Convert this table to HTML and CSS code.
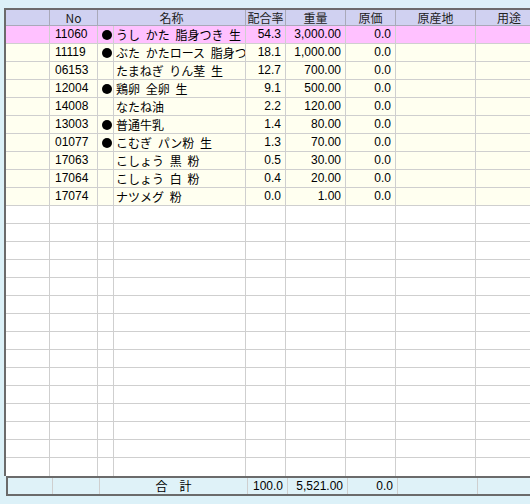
FILE: index.html
```html
<!DOCTYPE html>
<html lang="ja">
<head>
<meta charset="utf-8">
<link rel="stylesheet" href="styles.css">
</head>
<body>
<div class="sheet">
  <div class="grid">
    <div class="row head">
      <div class="c c0"></div>
      <div class="c c1 center">No</div>
      <div class="c c23 center">名称</div>
      <div class="c c4 center">配合率</div>
      <div class="c c5 center">重量</div>
      <div class="c c6 center">原価</div>
      <div class="c c7 center">原産地</div>
      <div class="c c8 right">用途</div>
    </div>
    <div class="row sel">
      <div class="c c0"></div><div class="c c1 num-l">11060</div><div class="c c2"><span class="dot"></span></div><div class="c c3">うし かた 脂身つき 生</div><div class="c c4 num">54.3</div><div class="c c5 num">3,000.00</div><div class="c c6 num">0.0</div><div class="c c7"></div><div class="c c8"></div>
    </div>
    <div class="row data">
      <div class="c c0"></div><div class="c c1 num-l">11119</div><div class="c c2"><span class="dot"></span></div><div class="c c3">ぶた かたロース 脂身つき 生</div><div class="c c4 num">18.1</div><div class="c c5 num">1,000.00</div><div class="c c6 num">0.0</div><div class="c c7"></div><div class="c c8"></div>
    </div>
    <div class="row data">
      <div class="c c0"></div><div class="c c1 num-l">06153</div><div class="c c2"></div><div class="c c3">たまねぎ りん茎 生</div><div class="c c4 num">12.7</div><div class="c c5 num">700.00</div><div class="c c6 num">0.0</div><div class="c c7"></div><div class="c c8"></div>
    </div>
    <div class="row data">
      <div class="c c0"></div><div class="c c1 num-l">12004</div><div class="c c2"><span class="dot"></span></div><div class="c c3">鶏卵 全卵 生</div><div class="c c4 num">9.1</div><div class="c c5 num">500.00</div><div class="c c6 num">0.0</div><div class="c c7"></div><div class="c c8"></div>
    </div>
    <div class="row data">
      <div class="c c0"></div><div class="c c1 num-l">14008</div><div class="c c2"></div><div class="c c3">なたね油</div><div class="c c4 num">2.2</div><div class="c c5 num">120.00</div><div class="c c6 num">0.0</div><div class="c c7"></div><div class="c c8"></div>
    </div>
    <div class="row data">
      <div class="c c0"></div><div class="c c1 num-l">13003</div><div class="c c2"><span class="dot"></span></div><div class="c c3">普通牛乳</div><div class="c c4 num">1.4</div><div class="c c5 num">80.00</div><div class="c c6 num">0.0</div><div class="c c7"></div><div class="c c8"></div>
    </div>
    <div class="row data">
      <div class="c c0"></div><div class="c c1 num-l">01077</div><div class="c c2"><span class="dot"></span></div><div class="c c3">こむぎ パン粉 生</div><div class="c c4 num">1.3</div><div class="c c5 num">70.00</div><div class="c c6 num">0.0</div><div class="c c7"></div><div class="c c8"></div>
    </div>
    <div class="row data">
      <div class="c c0"></div><div class="c c1 num-l">17063</div><div class="c c2"></div><div class="c c3">こしょう 黒 粉</div><div class="c c4 num">0.5</div><div class="c c5 num">30.00</div><div class="c c6 num">0.0</div><div class="c c7"></div><div class="c c8"></div>
    </div>
    <div class="row data">
      <div class="c c0"></div><div class="c c1 num-l">17064</div><div class="c c2"></div><div class="c c3">こしょう 白 粉</div><div class="c c4 num">0.4</div><div class="c c5 num">20.00</div><div class="c c6 num">0.0</div><div class="c c7"></div><div class="c c8"></div>
    </div>
    <div class="row data">
      <div class="c c0"></div><div class="c c1 num-l">17074</div><div class="c c2"></div><div class="c c3">ナツメグ 粉</div><div class="c c4 num">0.0</div><div class="c c5 num">1.00</div><div class="c c6 num">0.0</div><div class="c c7"></div><div class="c c8"></div>
    </div>
    <div class="row empty"><div class="c c0"></div><div class="c c1"></div><div class="c c2"></div><div class="c c3"></div><div class="c c4"></div><div class="c c5"></div><div class="c c6"></div><div class="c c7"></div><div class="c c8"></div></div>
    <div class="row empty"><div class="c c0"></div><div class="c c1"></div><div class="c c2"></div><div class="c c3"></div><div class="c c4"></div><div class="c c5"></div><div class="c c6"></div><div class="c c7"></div><div class="c c8"></div></div>
    <div class="row empty"><div class="c c0"></div><div class="c c1"></div><div class="c c2"></div><div class="c c3"></div><div class="c c4"></div><div class="c c5"></div><div class="c c6"></div><div class="c c7"></div><div class="c c8"></div></div>
    <div class="row empty"><div class="c c0"></div><div class="c c1"></div><div class="c c2"></div><div class="c c3"></div><div class="c c4"></div><div class="c c5"></div><div class="c c6"></div><div class="c c7"></div><div class="c c8"></div></div>
    <div class="row empty"><div class="c c0"></div><div class="c c1"></div><div class="c c2"></div><div class="c c3"></div><div class="c c4"></div><div class="c c5"></div><div class="c c6"></div><div class="c c7"></div><div class="c c8"></div></div>
    <div class="row empty"><div class="c c0"></div><div class="c c1"></div><div class="c c2"></div><div class="c c3"></div><div class="c c4"></div><div class="c c5"></div><div class="c c6"></div><div class="c c7"></div><div class="c c8"></div></div>
    <div class="row empty"><div class="c c0"></div><div class="c c1"></div><div class="c c2"></div><div class="c c3"></div><div class="c c4"></div><div class="c c5"></div><div class="c c6"></div><div class="c c7"></div><div class="c c8"></div></div>
    <div class="row empty"><div class="c c0"></div><div class="c c1"></div><div class="c c2"></div><div class="c c3"></div><div class="c c4"></div><div class="c c5"></div><div class="c c6"></div><div class="c c7"></div><div class="c c8"></div></div>
    <div class="row empty"><div class="c c0"></div><div class="c c1"></div><div class="c c2"></div><div class="c c3"></div><div class="c c4"></div><div class="c c5"></div><div class="c c6"></div><div class="c c7"></div><div class="c c8"></div></div>
    <div class="row empty"><div class="c c0"></div><div class="c c1"></div><div class="c c2"></div><div class="c c3"></div><div class="c c4"></div><div class="c c5"></div><div class="c c6"></div><div class="c c7"></div><div class="c c8"></div></div>
    <div class="row empty"><div class="c c0"></div><div class="c c1"></div><div class="c c2"></div><div class="c c3"></div><div class="c c4"></div><div class="c c5"></div><div class="c c6"></div><div class="c c7"></div><div class="c c8"></div></div>
    <div class="row empty"><div class="c c0"></div><div class="c c1"></div><div class="c c2"></div><div class="c c3"></div><div class="c c4"></div><div class="c c5"></div><div class="c c6"></div><div class="c c7"></div><div class="c c8"></div></div>
    <div class="row empty"><div class="c c0"></div><div class="c c1"></div><div class="c c2"></div><div class="c c3"></div><div class="c c4"></div><div class="c c5"></div><div class="c c6"></div><div class="c c7"></div><div class="c c8"></div></div>
    <div class="row empty"><div class="c c0"></div><div class="c c1"></div><div class="c c2"></div><div class="c c3"></div><div class="c c4"></div><div class="c c5"></div><div class="c c6"></div><div class="c c7"></div><div class="c c8"></div></div>
    <div class="row empty last"><div class="c c0"></div><div class="c c1"></div><div class="c c2"></div><div class="c c3"></div><div class="c c4"></div><div class="c c5"></div><div class="c c6"></div><div class="c c7"></div><div class="c c8"></div></div>
  </div>
  <div class="footer">
    <div class="f f0"></div>
    <div class="f f1"></div>
    <div class="f f23 center">合　計</div>
    <div class="f f4 num">100.0</div>
    <div class="f f5 num">5,521.00</div>
    <div class="f f6 num">0.0</div>
    <div class="f f7"></div>
    <div class="f f8"></div>
  </div>
</div>
</body>
</html>
```
FILE: styles.css
```css
html, body {
  margin: 0;
  padding: 0;
}
body {
  width: 530px;
  height: 504px;
  overflow: hidden;
  background: #dcf1f8;
  font-family: "Noto Sans CJK JP", "Noto Sans", sans-serif;
  font-size: 12px;
  color: #000;
}
.sheet {
  padding-top: 8px;
}
.grid {
  margin-left: 4px;
  width: 600px;
  border-left: 2px solid #6b6b6b;
  border-top: 2px solid #6b6b6b;
  background: #fff;
}
.row {
  display: flex;
  height: 18px;
  border-bottom: 1px solid #cfcfcf;
  box-sizing: border-box;
}
.row.last {
  border-bottom: none;
}
.row.head {
  height: 16px;
  background: #d0d1f1;
  border-bottom: 1px solid #a9a9b9;
  color: #222;
}
.row.sel { background: #ffc1ff; }
.row.data { background: #fffff0; }
.row.empty { background: #fff; }
.c {
  box-sizing: border-box;
  border-right: 1px solid #cfcfcf;
  overflow: hidden;
  white-space: nowrap;
  line-height: 17px;
  flex: none;
}
.head .c {
  border-right-color: #a9a9b9;
  line-height: 15px;
}
.c0 { width: 44px; }
.c1 { width: 48px; }
.c2 { width: 16px; display: flex; align-items: center; justify-content: center; }
.c3 { width: 132px; padding-left: 2px; word-spacing: 3px; }
.c23 { width: 148px; }
.c4 { width: 40px; }
.c5 { width: 60px; }
.c6 { width: 50px; }
.c7 { width: 80px; }
.c8 { width: 80px; }
.center { text-align: center; }
.right { text-align: right; padding-right: 34px; }
.num, .num-l {
  font-family: "Liberation Sans Narrow", "Liberation Sans", sans-serif;
  font-size: 12px;
}
.num { text-align: right; padding-right: 4px; }
.num-l { padding-left: 5px; }
.dot {
  width: 10px;
  height: 10px;
  border-radius: 50%;
  background: #000;
  margin-left: 2px;
}
.footer {
  margin-left: 6px;
  width: 600px;
  height: 20px;
  box-sizing: border-box;
  border-left: 2px solid #6b6b6b;
  border-top: 2px solid #6b6b6b;
  border-bottom: 2px solid #6b6b6b;
  background: #dff2f8;
  display: flex;
}
.f {
  box-sizing: border-box;
  border-right: 1px solid #cfcfcf;
  line-height: 16px;
  white-space: nowrap;
  flex: none;
}
.f0 { width: 45px; }
.f1 { width: 47px; }
.f23 { width: 148px; }
.f4 { width: 40px; }
.f5 { width: 60px; }
.f6 { width: 50px; }
.f7 { width: 80px; }
.f8 { width: 80px; }
```
